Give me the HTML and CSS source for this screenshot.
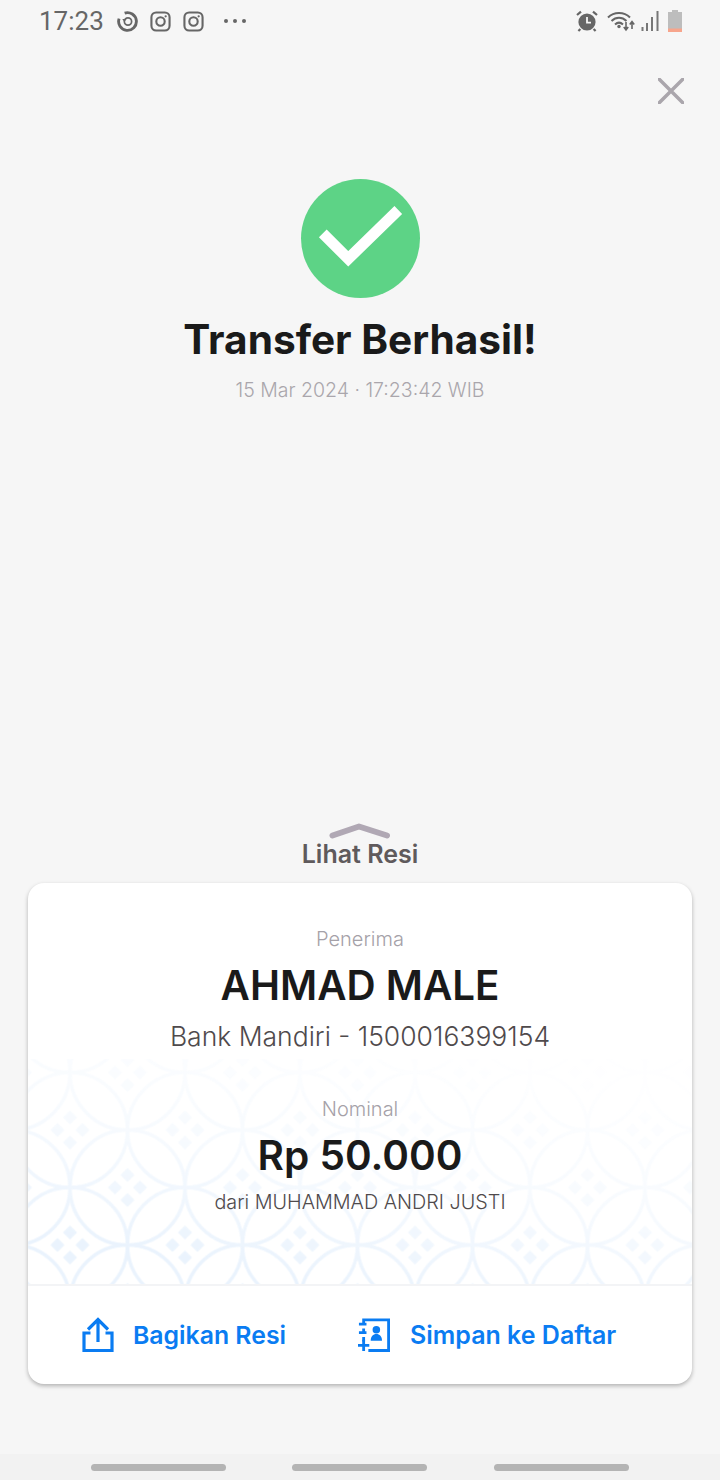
FILE: index.html

```html
<!DOCTYPE html>
<html lang="id">
<head>
    <meta charset="UTF-8">
    <meta name="viewport" content="width=device-width, initial-scale=1.0">
    <title>Transfer Berhasil</title>
    <link rel="stylesheet" href="styles.css">
</head>
<body>
    <div class="screen">
        <div class="status-bar">
            <div class="status-left">
                <span class="clock">17:23</span>
                <svg class="ic-sync" viewBox="0 0 22 22"><path d="M8 2.200A9.300 9.300 0 1 1 2.200 8" fill="none" stroke="#666" stroke-width="3"/><circle cx="11.500" cy="11" r="3.800" fill="none" stroke="#666" stroke-width="1.800"/><path d="M5.500 8.500h4.500l-2.200 3z" fill="#666"/></svg>
                <svg class="ic-insta" viewBox="0 0 22 22"><rect x="1.500" y="1.500" width="19" height="19" rx="5" fill="none" stroke="#666" stroke-width="2.200"/><circle cx="11" cy="11" r="4.400" fill="none" stroke="#666" stroke-width="2.200"/><circle cx="16.400" cy="5.600" r="1.200" fill="#666"/></svg>
                <svg class="ic-insta" viewBox="0 0 22 22"><rect x="1.500" y="1.500" width="19" height="19" rx="5" fill="none" stroke="#666" stroke-width="2.200"/><circle cx="11" cy="11" r="4.400" fill="none" stroke="#666" stroke-width="2.200"/><circle cx="16.400" cy="5.600" r="1.200" fill="#666"/></svg>
                <div class="more-dots"><i></i><i></i><i></i></div>
            </div>
            <div class="status-right">
                <svg class="ic-alarm" viewBox="0 0 22 22"><circle cx="11" cy="12" r="8.600" fill="#666"/><path d="M11 7v5.600h4" fill="none" stroke="#f6f6f6" stroke-width="1.800"/><path d="M1 5l4-3.400M21 5l-4-3.400M4.400 19l-2 2M17.600 19l2 2" stroke="#666" stroke-width="2.200" fill="none"/></svg>
                <svg class="ic-wifi" viewBox="0 0 28 22"><path d="M1 7.500C7 1.500 17 1.500 23 7.500M4.500 11C9 6.800 15 6.800 19.500 11M8 14.500c2.400-2.200 5.600-2.200 8 0" fill="none" stroke="#666" stroke-width="2"/><circle cx="12" cy="16.500" r="1.700" fill="#666"/><path d="M19 12v7M16.800 17l2.200 3 2.200-3M25 19v-7M22.800 14.500l2.200-3 2.200 3" fill="none" stroke="#666" stroke-width="1.600"/></svg>
                <svg class="ic-signal" viewBox="0 0 18 22"><path d="M1.500 21v-4M6 21v-8M11 21V7M16.500 21V1" stroke="#777" stroke-width="2" fill="none"/></svg>
                <svg class="ic-battery" viewBox="0 0 14 22"><path d="M4 0h6v2h4v20H0V2h4z" fill="#bdbdbd"/><rect y="18.500" width="14" height="3.500" fill="#f7a58c"/></svg>
            </div>
        </div>

        <div class="close-row">
            <svg class="ic-close" viewBox="0 0 26 26"><path d="M1 1l24 24M25 1L1 25" stroke="#aaa6ac" stroke-width="3.500" stroke-linecap="round" fill="none"/></svg>
        </div>

        <div class="hero">
            <svg class="ic-success" viewBox="0 0 119 119"><circle cx="59.500" cy="59.500" r="59.500" fill="#5dd386"/><path d="M21.800 54.300l25.500 25.500L97.300 31" fill="none" stroke="#fff" stroke-width="11"/></svg>
            <h1>Transfer Berhasil!</h1>
            <p class="timestamp">15 Mar 2024 · 17:23:42 WIB</p>
        </div>

        <div class="receipt-toggle">
            <svg class="ic-chevron" viewBox="0 0 62 16"><path d="M3.500 12.500L30 3.500l28 9" fill="none" stroke="#b0a8b4" stroke-width="6" stroke-linecap="round" stroke-linejoin="round"/></svg>
            <span>Lihat Resi</span>
        </div>

        <div class="card">
            <div class="card-body">
                <svg class="batik" aria-hidden="true">
                    <defs>
                        <pattern id="kawung" width="115" height="115" patternUnits="userSpaceOnUse" x="-15.500" y="13.500">
                            <g fill="none" stroke="#eaf3fd" stroke-width="3.500">
                                <circle cx="0" cy="0" r="57.500"/><circle cx="115" cy="0" r="57.500"/>
                                <circle cx="0" cy="115" r="57.500"/><circle cx="115" cy="115" r="57.500"/>
                                <circle cx="57.500" cy="57.500" r="57.500"/>
                            </g>
                            <g fill="#eaf3fd">
                                <path d="M57.500 38l7 7-7 7-7-7zM57.500 63l7 7-7 7-7-7zM45 50.500l7 7-7 7-7-7zM70 50.500l7 7-7 7-7-7z"/>
                                <path d="M0-19.500l7 7-7 7-7-7zM0 5.500l7 7-7 7-7-7zM-12.500-7l7 7-7 7-7-7zM12.500-7l7 7-7 7-7-7z"/>
                                <path d="M115-19.500l7 7-7 7-7-7zM115 5.500l7 7-7 7-7-7zM102.500-7l7 7-7 7-7-7zM127.500-7l7 7-7 7-7-7z"/>
                                <path d="M0 95.500l7 7-7 7-7-7zM0 120.500l7 7-7 7-7-7zM-12.500 108l7 7-7 7-7-7zM12.500 108l7 7-7 7-7-7z"/>
                                <path d="M115 95.500l7 7-7 7-7-7zM115 120.500l7 7-7 7-7-7zM102.500 108l7 7-7 7-7-7zM127.500 108l7 7-7 7-7-7z"/>
                            </g>
                        </pattern>
                    </defs>
                    <rect width="100%" height="100%" fill="url(#kawung)"/>
                </svg>
                <div class="detail">
                    <p class="label">Penerima</p>
                    <p class="name">AHMAD MALE</p>
                    <p class="account">Bank Mandiri - 1500016399154</p>
                    <p class="label label-nominal">Nominal</p>
                    <p class="amount">Rp 50.000</p>
                    <p class="sender">dari MUHAMMAD ANDRI JUSTI</p>
                </div>
            </div>
            <div class="card-actions">
                <a class="action action-share">
                    <svg class="ic-action" viewBox="0 0 32 36"><path d="M8.500 16H2v17.500h28V16h-6.500" fill="none" stroke="#0a7cf2" stroke-width="3.200"/><path d="M16 25V2.500M6 12.500L16 2.500l10 10" fill="none" stroke="#0a7cf2" stroke-width="3.200"/></svg>
                    <span>Bagikan Resi</span>
                </a>
                <a class="action action-save">
                    <svg class="ic-action" viewBox="0 0 34 36"><path d="M6 7V2h26.500v32.500H11" fill="none" stroke="#0a7cf2" stroke-width="3"/><path d="M6 11V15M6 20V25" stroke="#0a7cf2" stroke-width="3" fill="none"/><path d="M1 6.500h8M1 15.500h8" stroke="#0a7cf2" stroke-width="3" fill="none"/><path d="M0 29h12M6 23v12" stroke="#0a7cf2" stroke-width="3" fill="none"/><circle cx="19.500" cy="12.500" r="4" fill="#0a7cf2"/><path d="M13.500 24c0-4.500 2.500-7 6-7s6 2.500 6 7z" fill="#0a7cf2"/></svg>
                    <span>Simpan ke Daftar</span>
                </a>
            </div>
        </div>

        <div class="nav-bar">
            <i></i><i></i><i class="nav-last"></i>
        </div>
    </div>
</body>
</html>
```

FILE: styles.css

```css
html, body {
    margin: 0;
    padding: 0;
}
body {
    background-color: #f6f6f6;
    font-family: 'Inter', 'Liberation Sans', sans-serif;
}
p, h1 {
    margin: 0;
}
svg {
    display: block;
}
.screen {
    display: flex;
    flex-direction: column;
    height: 1480px;
}

/* status bar */
.status-bar {
    display: flex;
    justify-content: space-between;
    align-items: center;
    height: 42px;
    padding: 0 38px 0 39px;
    flex: none;
}
.status-left, .status-right {
    display: flex;
    align-items: center;
}
.clock {
    font-family: 'Roboto', sans-serif;
    font-size: 26px;
    color: #666;
    width: 78px;
}
.ic-sync, .ic-insta {
    width: 21px;
    height: 21px;
    margin-right: 12px;
}
.more-dots {
    display: flex;
    gap: 5px;
    margin-left: 8px;
}
.more-dots i {
    width: 4px;
    height: 4px;
    border-radius: 50%;
    background: #666;
}
.ic-alarm {
    width: 22px;
    height: 22px;
    margin-right: 9px;
}
.ic-wifi {
    width: 28px;
    height: 22px;
    margin-right: 6px;
}
.ic-signal {
    width: 18px;
    height: 22px;
    margin-right: 9px;
}
.ic-battery {
    width: 14px;
    height: 22px;
}

.close-row {
    display: flex;
    justify-content: flex-end;
    padding: 36px 36px 0 0;
}
.ic-close {
    width: 26px;
    height: 26px;
}

/* success block */
.hero {
    display: flex;
    flex-direction: column;
    align-items: center;
    padding-top: 75px;
}
.ic-success {
    width: 119px;
    height: 119px;
}
.hero h1 {
    font-size: 40.600px;
    font-weight: 700;
    line-height: 48px;
    color: #1a1a1a;
    margin-top: 18px;
}
.timestamp {
    font-size: 19.500px;
    font-weight: 300;
    line-height: 28px;
    color: #aaa6ac;
    margin-top: 12px;
}

.receipt-toggle {
    margin-top: auto;
    display: flex;
    flex-direction: column;
    align-items: center;
}
.ic-chevron {
    width: 62px;
    height: 16px;
}
.receipt-toggle span {
    font-size: 25px;
    font-weight: 600;
    line-height: 30px;
    color: #5f5a5c;
}

/* receipt card */
.card {
    margin: 14px 28px 70px;
    height: 501px;
    flex: none;
    display: flex;
    flex-direction: column;
    background: #fff;
    border-radius: 16px;
    box-shadow: 0 2px 4px rgba(0, 0, 0, 0.28);
    overflow: hidden;
}
.card-body {
    position: relative;
    flex: 1;
    border-bottom: 2px solid #f3f4f6;
}
.batik {
    position: absolute;
    left: 0;
    right: 0;
    bottom: 0;
    width: 100%;
    height: 225px;
    -webkit-mask-image: linear-gradient(190deg, rgba(0, 0, 0, 0.05) 12%, rgba(0, 0, 0, 0.4) 50%, #000 85%);
    mask-image: linear-gradient(190deg, rgba(0, 0, 0, 0.05) 12%, rgba(0, 0, 0, 0.4) 50%, #000 85%);
}
.detail {
    position: relative;
    display: flex;
    flex-direction: column;
    align-items: center;
    padding-top: 42px;
}
.label {
    font-size: 20px;
    font-weight: 300;
    line-height: 28px;
    color: #a5a1a8;
}
.name {
    font-size: 40.300px;
    font-weight: 600;
    line-height: 48px;
    color: #1a1a1a;
    margin-top: 9px;
}
.account {
    font-size: 26.500px;
    font-weight: 300;
    line-height: 36px;
    color: #4f4a4c;
    margin-top: 8px;
}
.label-nominal {
    margin-top: 41px;
}
.amount {
    font-size: 40.500px;
    font-weight: 600;
    line-height: 48px;
    color: #1a1a1a;
    margin-top: 9px;
}
.sender {
    font-size: 19.800px;
    font-weight: 300;
    line-height: 28px;
    color: #4f4a4c;
    margin-top: 8px;
}
.card-actions {
    display: flex;
    align-items: center;
    height: 98px;
    flex: none;
    padding-left: 54px;
}
.action {
    display: flex;
    align-items: center;
    font-weight: 600;
    color: #0a7cf2;
}
.action-share {
    font-size: 24.800px;
}
.ic-action {
    width: 32px;
    height: 36px;
}
.action-share span {
    margin-left: 19px;
}
.action-save {
    font-size: 25px;
    margin-left: 72px;
}
.action-save span {
    margin-left: 20px;
}

.nav-bar {
    display: flex;
    align-items: center;
    gap: 66px;
    height: 26px;
    flex: none;
    padding: 0 91px;
    background: #f2f2f2;
}
.nav-bar i {
    width: 135px;
    height: 7px;
    border-radius: 4px;
    background: #b4b4b4;
}
.nav-bar .nav-last {
    margin-left: 1px;
}
```
